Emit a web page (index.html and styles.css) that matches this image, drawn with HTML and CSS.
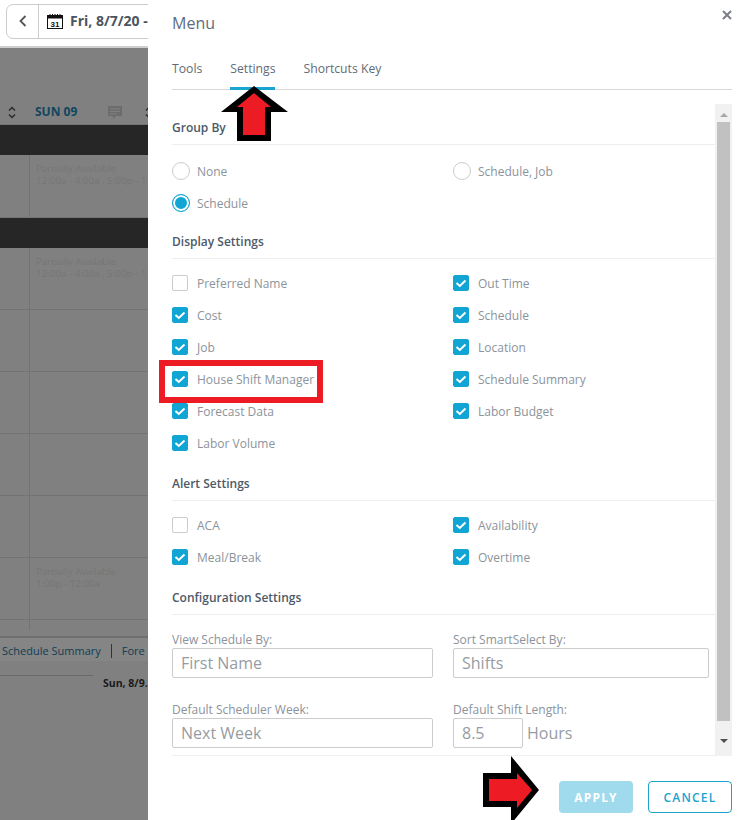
FILE: index.html
```html
<!DOCTYPE html>
<html lang="en">
<head>
<meta charset="utf-8">
<title>Menu</title>
<link rel="stylesheet" href="styles.css">
</head>
<body>
<div class="stage">
  <div class="backdrop">
    <header class="topbar">
      <div class="datepick">
        <span class="back"><svg width="8" height="12" viewBox="0 0 8 12"><path d="M6.5 1 L1.5 6 L6.5 11" fill="none" stroke="#555" stroke-width="1.8"/></svg></span>
        <span class="date">
          <svg class="cal" width="16" height="15" viewBox="0 0 16 15"><rect x=".5" y="1.5" width="15" height="13" fill="#fff" stroke="#111"/><rect x="1" y="2" width="14" height="2.5" fill="#111"/><path d="M3 0v2M5.500 0v2M8 0v2M10.500 0v2M13 0v2" stroke="#111"/><text x="8" y="13" class="caltext">31</text></svg>
          <b>Fri, 8/7/20 -</b>
        </span>
      </div>
    </header>
    <div class="gridhead">
      <svg class="sort" width="8" height="13" viewBox="0 0 8 13"><path d="M1 4.500 L4 1.500 L7 4.500 M1 8.500 L4 11.500 L7 8.500" fill="none" stroke="#2b2b2b" stroke-width="1.500"/></svg>
      <span class="dayname">SUN 09</span>
      <svg class="note" width="14" height="14" viewBox="0 0 14 14"><path d="M0 0h14v10H8l-3 3v-3H0z" fill="#6c6c6c"/><path d="M2 3h10M2 5.500h10M2 8h7" stroke="#808080"/></svg>
      <svg class="sort sort-two" width="8" height="13" viewBox="0 0 8 13"><path d="M1 4.500 L4 1.500 L7 4.500 M1 8.500 L4 11.500 L7 8.500" fill="none" stroke="#2b2b2b" stroke-width="1.500"/></svg>
    </div>
    <div class="band"></div>
    <div class="row row-tall"><div class="firstcell"></div><div class="cell">Partially Available<br>12:00a - 4:00a , 5:00p - 1</div></div>
    <div class="band"></div>
    <div class="row"><div class="firstcell"></div><div class="cell">Partially Available<br>12:00a - 4:00a , 5:00p - 1</div></div>
    <div class="row"><div class="firstcell"></div><div class="cell"></div></div>
    <div class="row"><div class="firstcell"></div><div class="cell"></div></div>
    <div class="row"><div class="firstcell"></div><div class="cell"></div></div>
    <div class="row"><div class="firstcell"></div><div class="cell"></div></div>
    <div class="row"><div class="firstcell"></div><div class="cell">Partially Available<br>1:00p - 12:00a</div></div>
    <div class="row row-last"><div class="firstcell"></div><div class="cell"></div></div>
    <div class="summarybar"><span>Schedule Summary</span><i></i><span>Fore</span></div>
    <div class="footline"><span class="rule"></span><b>Sun, 8/9.</b></div>
  </div>

  <aside class="panel">
    <div class="panel-head">
      <h1>Menu</h1>
      <svg class="close" width="10" height="10" viewBox="0 0 10 10"><path d="M1 1 L9 9 M9 1 L1 9" stroke="#7b8087" stroke-width="2"/></svg>
    </div>
    <nav class="tabs">
      <span class="tab">Tools</span>
      <span class="tab active">Settings</span>
      <span class="tab">Shortcuts Key</span>
    </nav>
    <div class="scrollarea">
      <div class="content">
        <h2 class="first">Group By</h2>
        <div class="opts radios">
          <label class="opt"><span class="radio"></span>None</label>
          <label class="opt"><span class="radio"></span>Schedule, Job</label>
          <label class="opt"><span class="radio on"></span>Schedule</label>
        </div>
        <h2>Display Settings</h2>
        <div class="opts">
          <label class="opt"><span class="box"></span>Preferred Name</label>
          <label class="opt"><span class="box on"><svg viewBox="0 0 16 16"><path d="M3.500 8 L6.800 11 L12.500 5.500"/></svg></span>Out Time</label>
          <label class="opt"><span class="box on"><svg viewBox="0 0 16 16"><path d="M3.500 8 L6.800 11 L12.500 5.500"/></svg></span>Cost</label>
          <label class="opt"><span class="box on"><svg viewBox="0 0 16 16"><path d="M3.500 8 L6.800 11 L12.500 5.500"/></svg></span>Schedule</label>
          <label class="opt"><span class="box on"><svg viewBox="0 0 16 16"><path d="M3.500 8 L6.800 11 L12.500 5.500"/></svg></span>Job</label>
          <label class="opt"><span class="box on"><svg viewBox="0 0 16 16"><path d="M3.500 8 L6.800 11 L12.500 5.500"/></svg></span>Location</label>
          <label class="opt"><span class="box on"><svg viewBox="0 0 16 16"><path d="M3.500 8 L6.800 11 L12.500 5.500"/></svg></span>House Shift Manager</label>
          <label class="opt"><span class="box on"><svg viewBox="0 0 16 16"><path d="M3.500 8 L6.800 11 L12.500 5.500"/></svg></span>Schedule Summary</label>
          <label class="opt"><span class="box on"><svg viewBox="0 0 16 16"><path d="M3.500 8 L6.800 11 L12.500 5.500"/></svg></span>Forecast Data</label>
          <label class="opt"><span class="box on"><svg viewBox="0 0 16 16"><path d="M3.500 8 L6.800 11 L12.500 5.500"/></svg></span>Labor Budget</label>
          <label class="opt"><span class="box on"><svg viewBox="0 0 16 16"><path d="M3.500 8 L6.800 11 L12.500 5.500"/></svg></span>Labor Volume</label>
        </div>
        <h2>Alert Settings</h2>
        <div class="opts">
          <label class="opt"><span class="box"></span>ACA</label>
          <label class="opt"><span class="box on"><svg viewBox="0 0 16 16"><path d="M3.500 8 L6.800 11 L12.500 5.500"/></svg></span>Availability</label>
          <label class="opt"><span class="box on"><svg viewBox="0 0 16 16"><path d="M3.500 8 L6.800 11 L12.500 5.500"/></svg></span>Meal/Break</label>
          <label class="opt"><span class="box on"><svg viewBox="0 0 16 16"><path d="M3.500 8 L6.800 11 L12.500 5.500"/></svg></span>Overtime</label>
        </div>
        <h2>Configuration Settings</h2>
        <div class="fields">
          <div class="field"><span class="fieldlabel">View Schedule By:</span><span class="input wide">First Name</span></div>
          <div class="field"><span class="fieldlabel">Sort SmartSelect By:</span><span class="input">Shifts</span></div>
          <div class="field"><span class="fieldlabel">Default Scheduler Week:</span><span class="input wide">Next Week</span></div>
          <div class="field"><span class="fieldlabel">Default Shift Length:</span><span class="inline"><span class="input short">8.5</span><span class="unit">Hours</span></span></div>
        </div>
      </div>
      <div class="scrollbar">
        <svg class="arrow" width="8" height="4" viewBox="0 0 8 4"><path d="M4 0L8 4H0z" fill="#a8a8a8"/></svg>
        <div class="thumb"></div>
        <svg class="arrow" width="8" height="4" viewBox="0 0 8 4"><path d="M0 0H8L4 4z" fill="#505050"/></svg>
      </div>
    </div>
    <footer class="actions">
      <button class="btn apply" type="button">APPLY</button>
      <button class="btn cancel" type="button">CANCEL</button>
    </footer>
  </aside>

  <div class="highlight"></div>
  <svg class="callout" width="742" height="820" viewBox="0 0 742 820">
    <path d="M254 86 L288 112 H271 V141 H237 V112 H221 Z" fill="#000"/>
    <path d="M254 93 L271 107 H265 V135 H243 V107 H237 Z" fill="#ed1c24"/>
    <path d="M511 756 L539 790 L511 824 V807 H483 V773 H511 Z" fill="#000"/>
    <path d="M517 773 L532 790 L517 808 V801 H489 V779 H517 Z" fill="#ed1c24"/>
  </svg>
</div>
</body>
</html>
```
FILE: styles.css
```css
* { box-sizing: border-box; }
html, body { margin: 0; padding: 0; }
body { font-family: "Open Sans", "Liberation Sans", sans-serif; }

.stage { position: relative; width: 742px; height: 820px; overflow: hidden; background: #808080; }

/* dimmed page behind the panel */
.backdrop { display: flex; flex-direction: column; width: 148px; height: 820px; overflow: hidden; }
.topbar { height: 48px; flex: none; background: #fff; border-bottom: 2px solid #cfcfcf; padding: 4px 0 0 6px; }
.datepick { display: flex; height: 35px; width: 400px; border: 1px solid #ccc; border-radius: 7px; }
.back { width: 32px; flex: none; display: flex; align-items: center; justify-content: center; border-right: 1px solid #ccc; padding-bottom: 2px; }
.date { display: flex; align-items: center; gap: 7px; padding-left: 8px; font-size: 14px; color: #4a5560; white-space: nowrap; }
.date b { font-weight: 700; position: relative; top: -1px; }
.cal { flex: none; }
.caltext { font-family: "Liberation Sans", sans-serif; font-size: 8px; font-weight: 700; text-anchor: middle; fill: #111; }

.gridhead { height: 77px; flex: none; display: flex; align-items: flex-end; padding: 0 0 4px 8px; border-bottom: 1px solid #737373; }
.sort { flex: none; margin-bottom: 1px; }
.dayname { margin-left: 19px; width: 73px; flex: none; font-size: 12px; font-weight: 700; line-height: 16px; color: #10465f; }
.note { flex: none; margin-bottom: 0; }
.sort-two { margin-left: 23px; }

.band { height: 30px; flex: none; background: #262626; }
.row { height: 62px; flex: none; display: flex; border-bottom: 1px solid #737373; }
.row-tall { height: 63px; }
.row-last { height: 10px; margin-bottom: 6px; border-bottom: 0; }
.firstcell { width: 30px; flex: none; border-right: 1px solid #737373; }
.cell { padding: 8px 0 0 6px; font-size: 9.800px; line-height: 12px; color: #767676; white-space: nowrap; }

.summarybar { height: 25px; flex: none; display: flex; align-items: center; background: #858585; border-top: 2px solid #6f6f6f; padding: 2px 0 0 2px; font-size: 11px; color: #103e54; white-space: nowrap; }
.summarybar i { width: 1px; height: 14px; margin: 0 10px; background: #333; }
.footline { flex: none; display: flex; align-items: flex-start; padding-top: 14px; font-size: 10.500px; color: #1a1a1a; white-space: nowrap; }
.footline .rule { width: 93px; height: 1px; flex: none; background: #6a6a6a; margin-right: 10px; }
.footline b { position: relative; top: 1px; font-weight: 700; }

/* panel */
.panel { position: absolute; top: 0; right: 0; bottom: 0; width: 594px; background: #fff; padding: 0 10px 0 24px; display: flex; flex-direction: column; }
.panel-head { height: 46px; flex: none; display: flex; align-items: flex-start; justify-content: space-between; }
.panel-head h1 { margin: 12px 0 0; font-size: 16px; font-weight: 400; line-height: 22px; color: #5d6d7e; }
.close { margin: 10px 0 0 0; }
.tabs { height: 44px; flex: none; display: flex; gap: 28px; border-bottom: 1px solid #d8d8d8; padding-top: 14px; }
.tab { height: 30px; font-size: 12.200px; line-height: 18px; color: #5f6b77; }
.tab.active { border-bottom: 3px solid #1ba4d0; color: #5f6b77; }

.scrollarea { margin-top: 14px; height: 652px; flex: none; display: flex; border-bottom: 1px solid #f0f0f0; }
.content { flex: 1; min-width: 0; padding-top: 15px; }
h2 { margin: 15px 0 0; height: 27px; padding-top: 1px; font-size: 12px; font-weight: 600; line-height: 18px; color: #4c5a68; border-bottom: 1px solid #eee; }
h2.first { margin-top: 0; height: 26px; padding-top: 0; }
.opts { display: grid; grid-template-columns: 281px 1fr; grid-auto-rows: 32px; padding-top: 8px; }
.radios { padding-top: 10px; margin-bottom: -2px; }
.opt { display: flex; align-items: center; font-size: 12px; color: #8b939c; }
.box { width: 16px; height: 16px; flex: none; margin-right: 9px; border: 1px solid #ccc; border-radius: 2px; }
.box.on { background: #11a5d3; border-color: #11a5d3; }
.box svg { display: block; width: 16px; height: 16px; margin: -1px; fill: none; stroke: #fff; stroke-width: 2; }
.radio { width: 18px; height: 18px; flex: none; margin-right: 7px; border: 1px solid #ccc; border-radius: 50%; }
.radio.on { border-color: #11a5d3; background: #11a5d3; box-shadow: inset 0 0 0 2px #fff; }

.fields { display: grid; grid-template-columns: 281px 256px; grid-auto-rows: 70px; padding-top: 16px; }
.field { display: flex; flex-direction: column; align-items: flex-start; }
.fieldlabel { height: 17px; font-size: 12px; line-height: 18px; color: #8b939c; }
.input { display: block; width: 256px; height: 30px; border: 1px solid #ccc; border-radius: 2px; padding-left: 8px; font-size: 16px; line-height: 28px; color: #969ca3; }
.input.wide { width: 261px; }
.inline { display: flex; }
.input.short { width: 70px; }
.unit { margin-left: 4px; font-size: 16px; line-height: 30px; color: #969ca3; }

.scrollbar { width: 17px; flex: none; background: #f1f1f1; display: flex; flex-direction: column; align-items: center; padding: 4px 0 8px; margin-bottom: -1px; height: 652px; }
.arrow { flex: none; margin: 5px 0; }
.thumb { flex: 1; width: 13px; background: #c1c1c1; margin: 0 0 13px; }

.actions { flex: 1; display: flex; justify-content: flex-end; gap: 15px; padding-top: 25px; }
.btn { height: 32px; border-radius: 4px; font-family: inherit; font-size: 12px; font-weight: 600; letter-spacing: 1.200px; padding: 0; }
.apply { width: 74px; background: #a0daed; border: 0; color: #fff; font-weight: 700; }
.cancel { width: 84px; background: #fff; border: 1px solid #1ba4d0; color: #1ba4d0; }

/* annotations drawn over the screenshot */
.highlight { position: absolute; left: 159px; top: 360px; width: 164px; height: 43px; border: 6px solid #ed1c24; }
.callout { position: absolute; left: 0; top: 0; pointer-events: none; }
```
